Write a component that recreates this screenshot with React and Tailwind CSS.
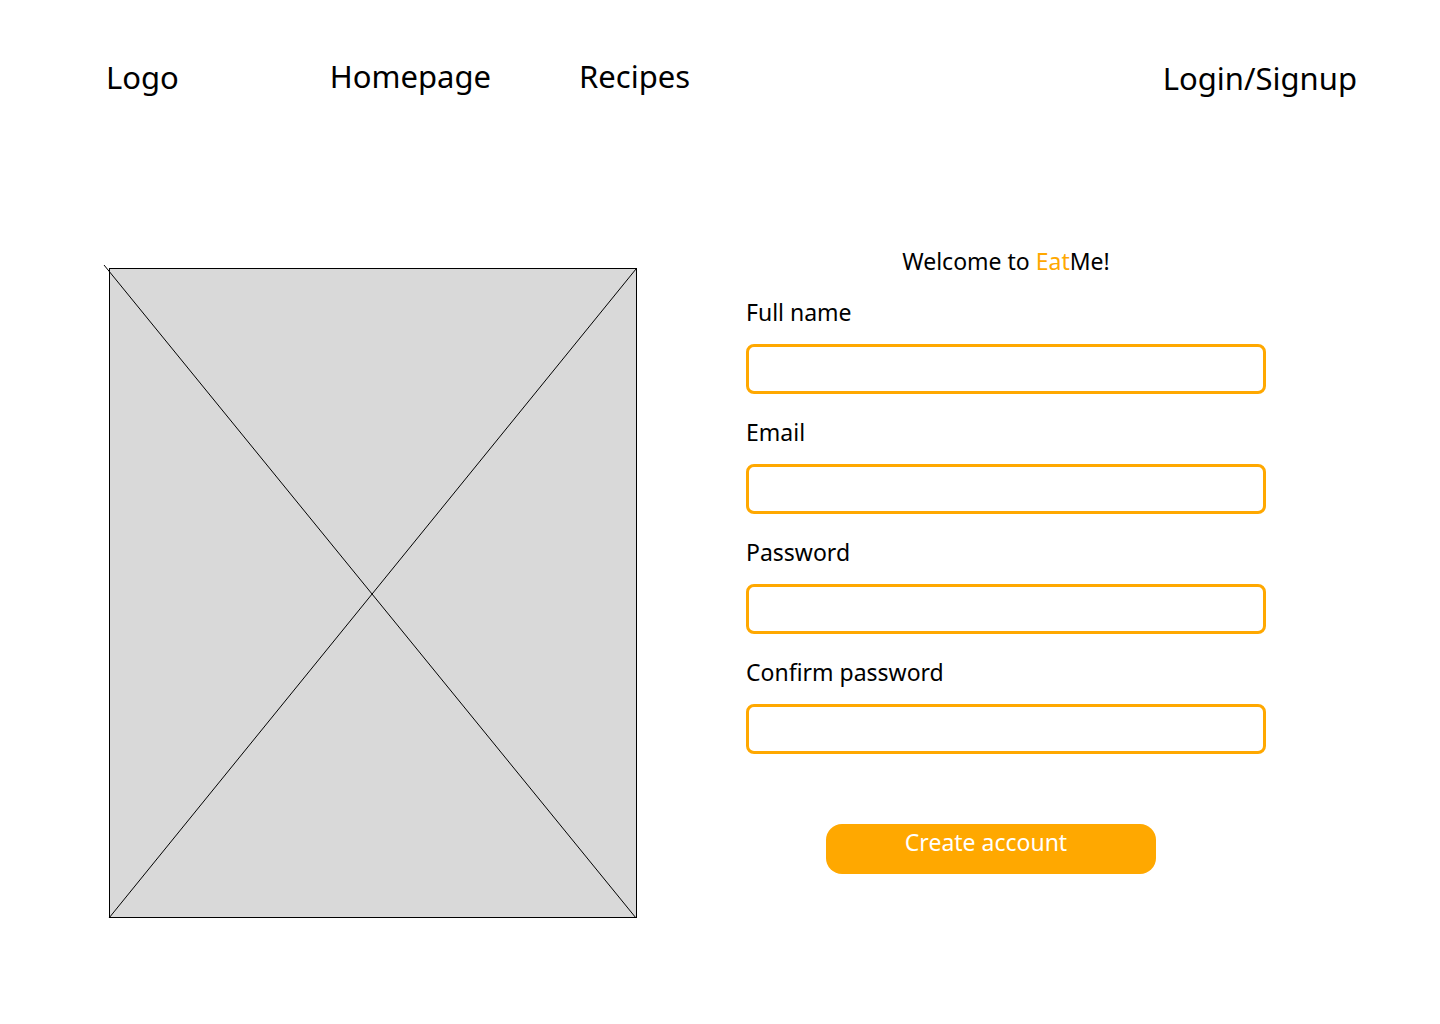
const font = { fontFamily: '"Noto Sans", "Open Sans", sans-serif' }

function Field({ label, mt }) {
  return (
    <div className={mt}>
      <label className="block text-[23px] leading-[32px] text-black">{label}</label>
      <div className="mt-[16px] h-[50px] w-[520px] rounded-[8px] border-[3px] border-[#ffa800] bg-white" />
    </div>
  )
}

export default function App() {
  return (
    <div className="min-h-[1024px] w-[1440px] bg-white" style={font}>
      <header className="flex items-center pt-[52px] text-[31px] text-black">
        <span className="ml-[106px] leading-[44px] mt-[2px]">Logo</span>
        <span className="ml-[151px] leading-[44px]">Homepage</span>
        <span className="ml-[88px] leading-[44px]">Recipes</span>
        <span className="ml-auto mr-[83px] leading-[44px] mt-[4px]">Login/Signup</span>
      </header>

      <main className="mt-[146px] flex">
        <div className="relative ml-[109px] mt-[22px] h-[650px] w-[528px] border border-black bg-[#d9d9d9]">
          <svg className="absolute -left-[6px] -top-[4px] overflow-visible" width="534" height="654" viewBox="0 0 534 654">
            <line x1="0" y1="0" x2="532" y2="653" stroke="black" strokeWidth="1" />
            <line x1="5" y1="653" x2="532" y2="4" stroke="black" strokeWidth="1" />
          </svg>
        </div>

        <div className="ml-[109px] w-[520px]">
          <p className="-mt-[1px] text-center text-[23px] leading-[32px] text-black">
            Welcome to <span className="text-[#ffa800]">Eat</span>Me!
          </p>
          <Field label="Full name" mt="mt-[19px]" />
          <Field label="Email" mt="mt-[22px]" />
          <Field label="Password" mt="mt-[22px]" />
          <Field label="Confirm password" mt="mt-[22px]" />
          <button className="ml-[80px] mt-[70px] flex h-[50px] w-[330px] justify-center rounded-[16px] bg-[#ffa800] pt-[2px] pr-[10px] text-[23px] leading-[32px] text-white">
            Create account
          </button>
        </div>
      </main>
    </div>
  )
}
